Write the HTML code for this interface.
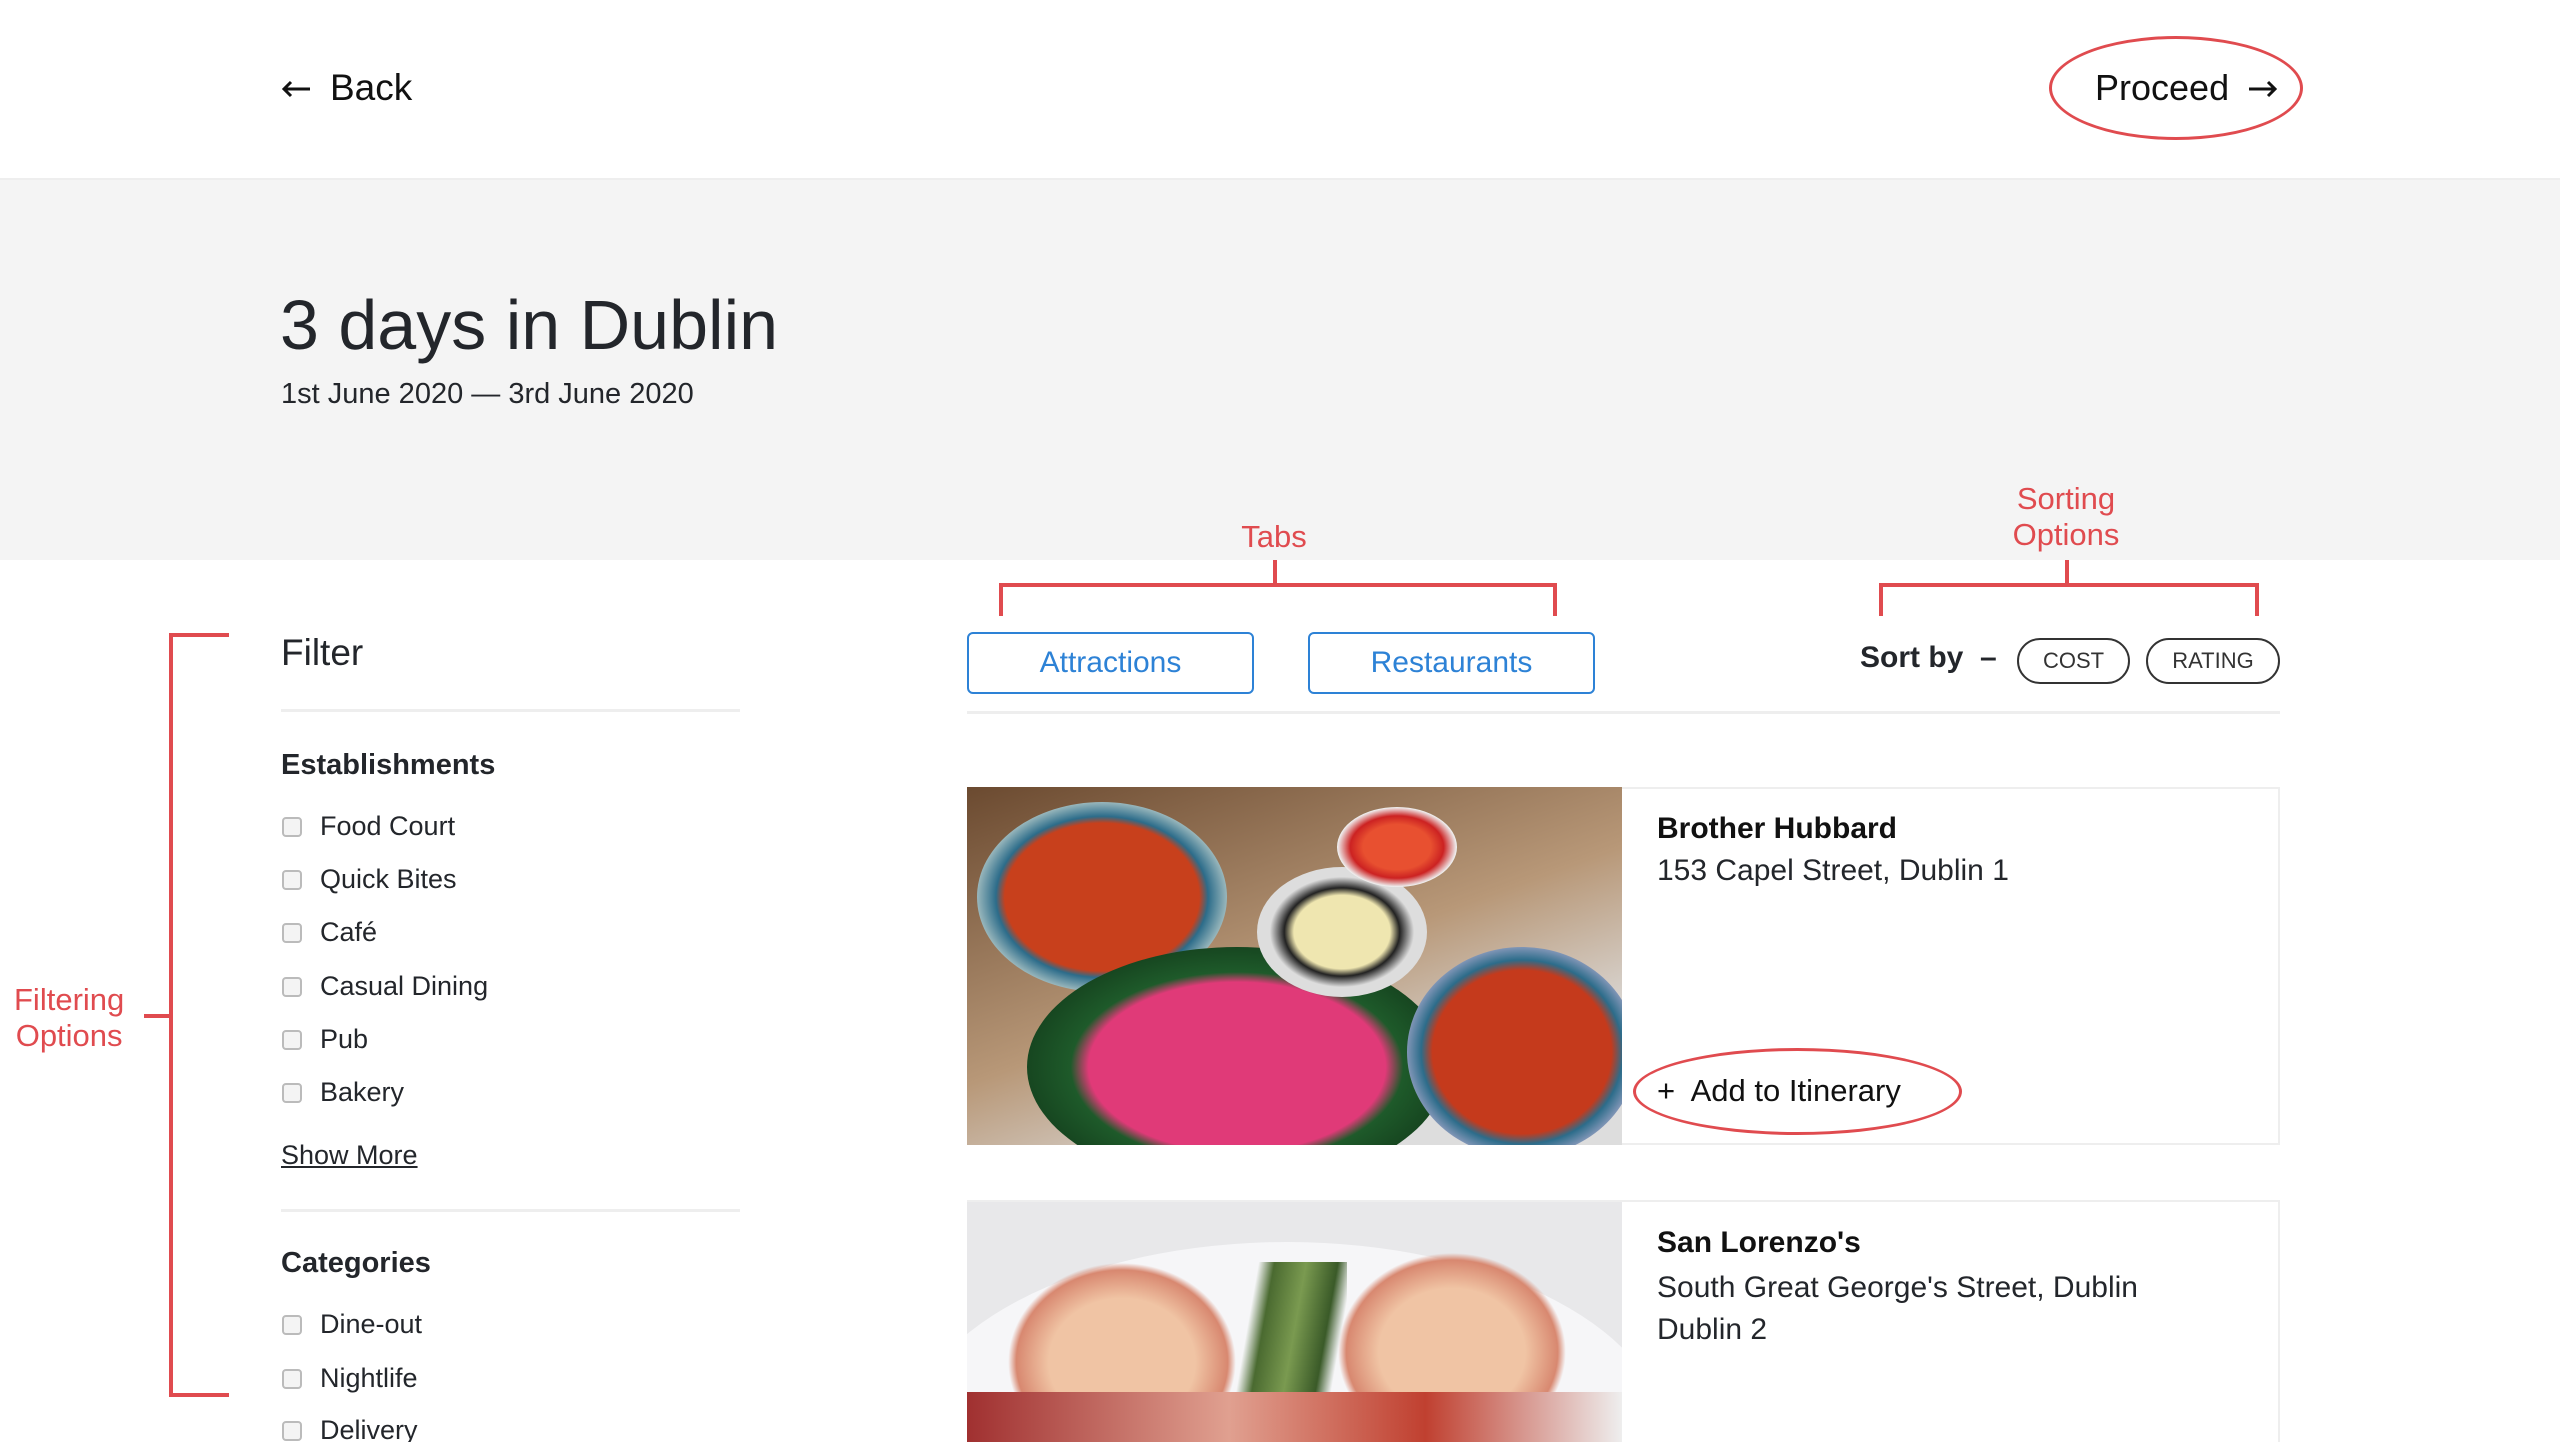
<!DOCTYPE html>
<html style="width:2560px;height:1442px;overflow:hidden"><head><meta charset="utf-8"><style>
*{margin:0;padding:0;box-sizing:border-box}
body{width:2560px;height:1442px;overflow:hidden;background:#fff;font-family:"Liberation Sans",sans-serif;color:#23262b;position:relative}
.a{position:absolute;white-space:nowrap}
.red{color:#e04b4f}
.rl{position:absolute;background:#e04b4f}
.cb{position:absolute;left:282px;width:20px;height:20px;border:2px solid #bbb;border-radius:4px;background:#f4f4f4}
.it{position:absolute;left:320px;font-size:27px;line-height:32px}
.hr{position:absolute;height:3px;background:#eeeeee}
.tab{position:absolute;top:632px;height:62px;border:2px solid #2d82d6;border-radius:6px;color:#2d82d6;font-size:30px;display:flex;align-items:center;justify-content:center}
.pill{position:absolute;top:638px;height:46px;border:2px solid #333;border-radius:23px;font-size:22px;display:flex;align-items:center;justify-content:center;color:#333}
</style></head><body>
<!-- header -->
<svg class="a" style="left:281px;top:80px" width="30" height="18" viewBox="0 0 30 18"><path d="M29 9H3M10 2L3 9l7 7" stroke="#111" stroke-width="3" fill="none"/></svg>
<div class="a" style="left:330px;top:66px;font-size:37px;line-height:44px;color:#111">Back</div>
<div class="a" style="left:2049px;top:36px;width:254px;height:104px;border:3px solid #e04b4f;border-radius:50%"></div>
<div class="a" style="left:2095px;top:66px;font-size:36px;line-height:44px;color:#111">Proceed</div>
<svg class="a" style="left:2248px;top:80px" width="30" height="18" viewBox="0 0 30 18"><path d="M1 9h26M20 2l7 7-7 7" stroke="#111" stroke-width="3" fill="none"/></svg>
<!-- gray band -->
<div class="a" style="left:0;top:178px;width:2560px;height:382px;background:#f4f4f4;border-top:2px solid #eee"></div>
<div class="a" style="left:280px;top:282px;font-size:70px;line-height:86px">3 days in Dublin</div>
<div class="a" style="left:281px;top:376px;font-size:29px;line-height:36px">1st June 2020 — 3rd June 2020</div>
<!-- annotations -->
<div class="a red" style="left:1174px;top:518px;width:200px;text-align:center;font-size:31px;line-height:38px">Tabs</div>
<div class="rl" style="left:1273px;top:560px;width:4px;height:26px"></div>
<div class="rl" style="left:999px;top:583px;width:558px;height:4px"></div>
<div class="rl" style="left:999px;top:583px;width:4px;height:33px"></div>
<div class="rl" style="left:1553px;top:583px;width:4px;height:33px"></div>

<div class="a red" style="left:1946px;top:481px;width:240px;text-align:center;font-size:31px;line-height:36px">Sorting<br>Options</div>
<div class="rl" style="left:2065px;top:560px;width:4px;height:26px"></div>
<div class="rl" style="left:1879px;top:583px;width:380px;height:4px"></div>
<div class="rl" style="left:1879px;top:583px;width:4px;height:33px"></div>
<div class="rl" style="left:2255px;top:583px;width:4px;height:33px"></div>

<div class="rl" style="left:169px;top:633px;width:4px;height:764px"></div>
<div class="rl" style="left:169px;top:633px;width:60px;height:4px"></div>
<div class="rl" style="left:169px;top:1393px;width:60px;height:4px"></div>
<div class="rl" style="left:144px;top:1014px;width:26px;height:4px"></div>
<div class="a red" style="left:14px;top:982px;font-size:31px;line-height:36px;text-align:center">Filtering<br>Options</div>

<!-- filter -->
<div class="a" style="left:281px;top:631px;font-size:37px;line-height:44px">Filter</div>
<div class="hr" style="left:281px;top:709px;width:459px"></div>
<div class="a" style="left:281px;top:748px;font-size:29px;line-height:34px;font-weight:bold">Establishments</div>
<div class="cb" style="top:817px"></div><div class="it" style="top:810px">Food Court</div>
<div class="cb" style="top:870px"></div><div class="it" style="top:863px">Quick Bites</div>
<div class="cb" style="top:923px"></div><div class="it" style="top:916px">Café</div>
<div class="cb" style="top:977px"></div><div class="it" style="top:970px">Casual Dining</div>
<div class="cb" style="top:1030px"></div><div class="it" style="top:1023px">Pub</div>
<div class="cb" style="top:1083px"></div><div class="it" style="top:1076px">Bakery</div>
<div class="a" style="left:281px;top:1139px;font-size:27px;line-height:32px;text-decoration:underline">Show More</div>
<div class="hr" style="left:281px;top:1209px;width:459px"></div>
<div class="a" style="left:281px;top:1246px;font-size:29px;line-height:34px;font-weight:bold">Categories</div>
<div class="cb" style="top:1315px"></div><div class="it" style="top:1308px">Dine-out</div>
<div class="cb" style="top:1369px"></div><div class="it" style="top:1362px">Nightlife</div>
<div class="cb" style="top:1421px"></div><div class="it" style="top:1414px">Delivery</div>

<!-- tabs -->
<div class="tab" style="left:967px;width:287px">Attractions</div>
<div class="tab" style="left:1308px;width:287px">Restaurants</div>
<div class="a" style="left:1860px;top:640px;font-size:30px;line-height:36px;font-weight:bold">Sort by &nbsp;–</div>
<div class="pill" style="left:2017px;width:113px">COST</div>
<div class="pill" style="left:2146px;width:134px">RATING</div>
<div class="hr" style="left:967px;top:711px;width:1313px"></div>

<!-- card 1 -->
<div class="a" style="left:967px;top:787px;width:1313px;height:358px;border:2px solid #eee"></div>
<div class="a" style="left:967px;top:787px;width:655px;height:358px;overflow:hidden;background:#8a6a4a">
 <div class="a" style="left:0;top:0;width:655px;height:358px;background:linear-gradient(160deg,#6b4a30,#b89878 50%,#ddd 80%)"></div>
 <div class="a" style="left:10px;top:15px;width:250px;height:190px;border-radius:50%;background:radial-gradient(#c8401c 55%,#2c6c8a 60%,#c5d5d0 75%)"></div>
 <div class="a" style="left:60px;top:160px;width:420px;height:240px;border-radius:50%;background:radial-gradient(#e03a78 50%,#1e5a2a 56%,#123a1a 80%)"></div>
 <div class="a" style="left:290px;top:80px;width:170px;height:130px;border-radius:50%;background:radial-gradient(#efe6b0 40%,#222 48%,#ddd 60%)"></div>
 <div class="a" style="left:440px;top:160px;width:230px;height:210px;border-radius:50%;background:radial-gradient(#c53a1c 55%,#2c6c8a 62%,#aac 75%)"></div>
 <div class="a" style="left:370px;top:20px;width:120px;height:80px;border-radius:50%;background:radial-gradient(#e85030 40%,#c22 55%,#eee 70%)"></div>
</div>
<div class="a" style="left:1657px;top:811px;font-size:30px;line-height:36px;font-weight:bold;color:#111">Brother Hubbard</div>
<div class="a" style="left:1657px;top:853px;font-size:30px;line-height:36px">153 Capel Street, Dublin 1</div>
<div class="a" style="left:1633px;top:1048px;width:329px;height:87px;border:3px solid #e04b4f;border-radius:50%"></div>
<div class="a" style="left:1657px;top:1072px;font-size:31px;line-height:38px;color:#111">+&nbsp; Add to Itinerary</div>

<!-- card 2 -->
<div class="a" style="left:967px;top:1200px;width:1313px;height:260px;border:2px solid #eee"></div>
<div class="a" style="left:967px;top:1202px;width:655px;height:240px;overflow:hidden;background:#e8e8ea">
 <div class="a" style="left:-60px;top:40px;width:760px;height:400px;border-radius:50%;background:#f6f6f8"></div>
 <div class="a" style="left:40px;top:60px;width:230px;height:200px;border-radius:50%;background:radial-gradient(#f0c4a4 45%,#d88870 65%,transparent 70%)"></div>
 <div class="a" style="left:370px;top:50px;width:230px;height:200px;border-radius:50%;background:radial-gradient(#f0c4a4 45%,#d88870 65%,transparent 70%)"></div>
 <div class="a" style="left:260px;top:60px;width:120px;height:220px;background:linear-gradient(100deg,transparent 20%,#4a6a30 30%,#7a9a50 50%,#3a5a28 70%,transparent 80%)"></div>
 <div class="a" style="left:0;top:190px;width:655px;height:60px;background:linear-gradient(90deg,#a03030,#e0a090 40%,#c04030 70%,#eee)"></div>
</div>
<div class="a" style="left:1657px;top:1225px;font-size:30px;line-height:36px;font-weight:bold;color:#111">San Lorenzo's</div>
<div class="a" style="left:1657px;top:1267px;font-size:30px;line-height:42px">South Great George's Street, Dublin<br>Dublin 2</div>
</body></html>
